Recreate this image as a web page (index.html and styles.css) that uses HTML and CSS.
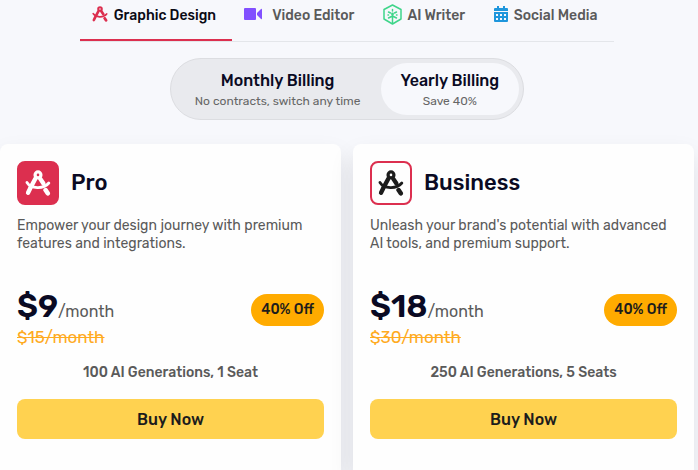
FILE: index.html
```html
<!DOCTYPE html>
<html lang="en">
<head>
<meta charset="utf-8">
<meta name="viewport" content="width=device-width, initial-scale=1">
<title>Pricing</title>
<link rel="stylesheet" href="styles.css">
</head>
<body>
<!-- compass logo, shared by the tab and both cards -->
<svg class="defs" width="0" height="0">
  <symbol id="compass" viewBox="0 0 24 24">
    <g fill="none" stroke="currentColor" stroke-linecap="round">
      <circle cx="12" cy="4.500" r="2.700" stroke-width="3"/>
      <path d="M9.500 8 L5 16.500" stroke-width="4"/>
      <path d="M4.500 17.500 L2.800 21" stroke-width="4"/>
      <path d="M14 8 L17 12.500" stroke-width="4"/>
      <path d="M19 18.500 L21 21.500" stroke-width="4.200"/>
      <path d="M1.800 11.500 C5.500 17.500 17 18 22 12" stroke-width="2.600"/>
    </g>
  </symbol>
</svg>

<div class="page">
  <nav class="tabs">
    <a href="#graphic" class="tab active">
      <svg class="icon red" width="16" height="16"><use href="#compass"/></svg>
      Graphic Design
    </a>
    <a href="#video" class="tab video">
      <svg class="icon" width="18" height="12" viewBox="0 0 18 12" fill="#8250ff"><rect width="12" height="12" rx="1"/><path d="M13 5 L17 1 Q18 0 18 2 V10 Q18 12 17 11 L13 7Z"/></svg>
      Video Editor
    </a>
    <a href="#writer" class="tab">
      <svg class="icon" width="19" height="21" viewBox="0 0 19 21" fill="none" stroke="#3fd58a" stroke-width="1.500" stroke-linecap="round" stroke-linejoin="round">
        <path d="M9.500 1 L18 5.500 V15 L9.500 20 L1 15 V5.500Z"/>
        <path d="M9.500 11 V19 M9.500 12 L5.500 14 M9.500 12 L13.500 14 M9.500 5.500 V7 M5.500 8 L7.500 9 M13.500 8 L11.500 9 M5 11 H5.500 M13.500 11 H14"/>
        <circle cx="9.500" cy="10" r="0.700"/>
      </svg>
      AI Writer
    </a>
    <a href="#social" class="tab">
      <svg class="icon" width="14" height="16" viewBox="0 0 14 16">
        <path fill="#1e96dc" d="M3 0h2v2h4V0h2v2h2q1 0 1 1v2H0V3q0-1 1-1h2zM0 6h14v9q0 1-1 1H1q-1 0-1-1z"/>
        <path fill="#f7f8fc" d="M2 8h2v2H2zM6 8h2v2H6zM10 8h2v2h-2zM2 12h2v2H2zM6 12h2v2H6zM10 12h2v2h-2z"/>
      </svg>
      Social Media
    </a>
  </nav>

  <div class="billing">
    <button type="button" class="option">
      <span class="option-name">Monthly Billing</span>
      <span class="option-note">No contracts, switch any time</span>
    </button>
    <button type="button" class="option selected">
      <span class="option-name">Yearly Billing</span>
      <span class="option-note">Save 40%</span>
    </button>
  </div>

  <main class="plans">
    <section class="card">
      <header class="card-head">
        <span class="logo filled"><svg width="26" height="26"><use href="#compass"/></svg></span>
        <h2>Pro</h2>
      </header>
      <p class="description">Empower your design journey with premium features and integrations.</p>
      <div class="price-row">
        <div class="price"><strong>$9</strong><span>/month</span></div>
        <span class="badge">40% Off</span>
      </div>
      <del class="old-price">$15/month</del>
      <p class="quota">100 AI Generations, 1 Seat</p>
      <button type="button" class="buy">Buy Now</button>
    </section>

    <section class="card">
      <header class="card-head">
        <span class="logo"><svg width="26" height="26"><use href="#compass"/></svg></span>
        <h2>Business</h2>
      </header>
      <p class="description">Unleash your brand's potential with advanced AI tools, and premium support.</p>
      <div class="price-row">
        <div class="price"><strong>$18</strong><span>/month</span></div>
        <span class="badge">40% Off</span>
      </div>
      <del class="old-price">$30/month</del>
      <p class="quota">250 AI Generations, 5 Seats</p>
      <button type="button" class="buy">Buy Now</button>
    </section>
  </main>
</div>
</body>
</html>
```

FILE: styles.css
```css
* {
  box-sizing: border-box;
}

body {
  margin: 0;
  background: #f7f8fc;
  color: #0a0a23;
  font-family: Rubik, Roboto, sans-serif;
}

h2, p {
  margin: 0;
}

button {
  font-family: inherit;
  border: 0;
  cursor: pointer;
}

.defs {
  position: absolute;
}

.page {
  display: flex;
  flex-direction: column;
  min-height: 100vh;
  padding-right: 4px;
}

/* product tabs */
.tabs {
  display: grid;
  grid-template-columns: 152fr 138fr 111fr 132fr;
  align-self: center;
  width: 77%;
  height: 42px;
  border-bottom: 1px solid #e4e6ea;
}

.tab {
  display: flex;
  align-items: center;
  gap: 6px;
  padding: 0 0 9px 12px;
  color: #5a5a5a;
  font-size: 14px;
  font-weight: 500;
  line-height: 18px;
  text-decoration: none;
  white-space: nowrap;
}

.tab.video {
  gap: 10px;
}

.tab.active {
  padding-bottom: 7px;
  color: #0a0a14;
  border-bottom: 2px solid #dc2f4f;
}

.icon {
  flex: none;
  margin-bottom: 4px;
}

.red {
  color: #dc2f4f;
}

/* monthly / yearly switch */
.billing {
  display: flex;
  align-self: center;
  margin-top: 16px;
  padding: 4px;
  background: #e9eaee;
  border: 1px solid #dcdde1;
  border-radius: 32px;
}

.option {
  display: flex;
  flex-direction: column;
  align-items: center;
  gap: 3px;
  padding: 9px 20px 6px;
  background: none;
  border-radius: 26px;
}

.option.selected {
  background: #f7f8fc;
}

.option-name {
  color: #0a0a23;
  font-size: 16px;
  font-weight: 500;
  line-height: 18px;
}

.option-note {
  color: #666;
  font-size: 12px;
  line-height: 16px;
}

/* plan cards */
.plans {
  display: grid;
  grid-template-columns: 1fr 1fr;
  gap: 12px;
  flex: 1;
  margin-top: 24px;
}

.card {
  display: flex;
  flex-direction: column;
  padding: 17px 17px 31px;
  background: #fefefe;
  border-radius: 8px 8px 0 0;
  box-shadow: 0 12px 24px rgba(20, 24, 32, 0.1);
}

.card-head {
  display: flex;
  align-items: center;
  gap: 12px;
}

.card-head h2 {
  font-size: 22px;
  font-weight: 500;
  line-height: 28px;
}

.logo {
  display: flex;
  align-items: center;
  justify-content: center;
  width: 42px;
  height: 44px;
  color: #1c1c1c;
  border: 2px solid #dc2f4f;
  border-radius: 8px;
}

.logo.filled {
  color: #fff;
  background: #dc2f4f;
}

.description {
  min-height: 36px;
  margin-top: 12px;
  color: #5a5a5a;
  font-size: 14px;
  line-height: 18px;
}

.price-row {
  display: flex;
  align-items: flex-start;
  justify-content: space-between;
  margin-top: 37px;
}

.price {
  display: flex;
  align-items: baseline;
  color: #5a5a5a;
  font-size: 16px;
  line-height: 18px;
}

.price strong {
  color: #0a0a23;
  font-size: 32px;
  font-weight: 600;
  line-height: 32px;
}

.badge {
  margin-top: 4px;
  padding: 0 10px;
  background: #ffab00;
  color: #1c1c1c;
  border-radius: 16px;
  font-size: 14px;
  font-weight: 500;
  line-height: 32px;
}

.old-price {
  margin-top: 2px;
  color: #ffab1f;
  font-size: 17px;
  line-height: 18px;
}

.quota {
  margin-top: 18px;
  color: #5a5a5a;
  font-size: 14px;
  font-weight: 500;
  line-height: 18px;
  text-align: center;
}

.buy {
  height: 40px;
  margin-top: 17px;
  background: #ffd250;
  color: #1c1c1c;
  border-radius: 8px;
  font-size: 16px;
  font-weight: 500;
}
```
